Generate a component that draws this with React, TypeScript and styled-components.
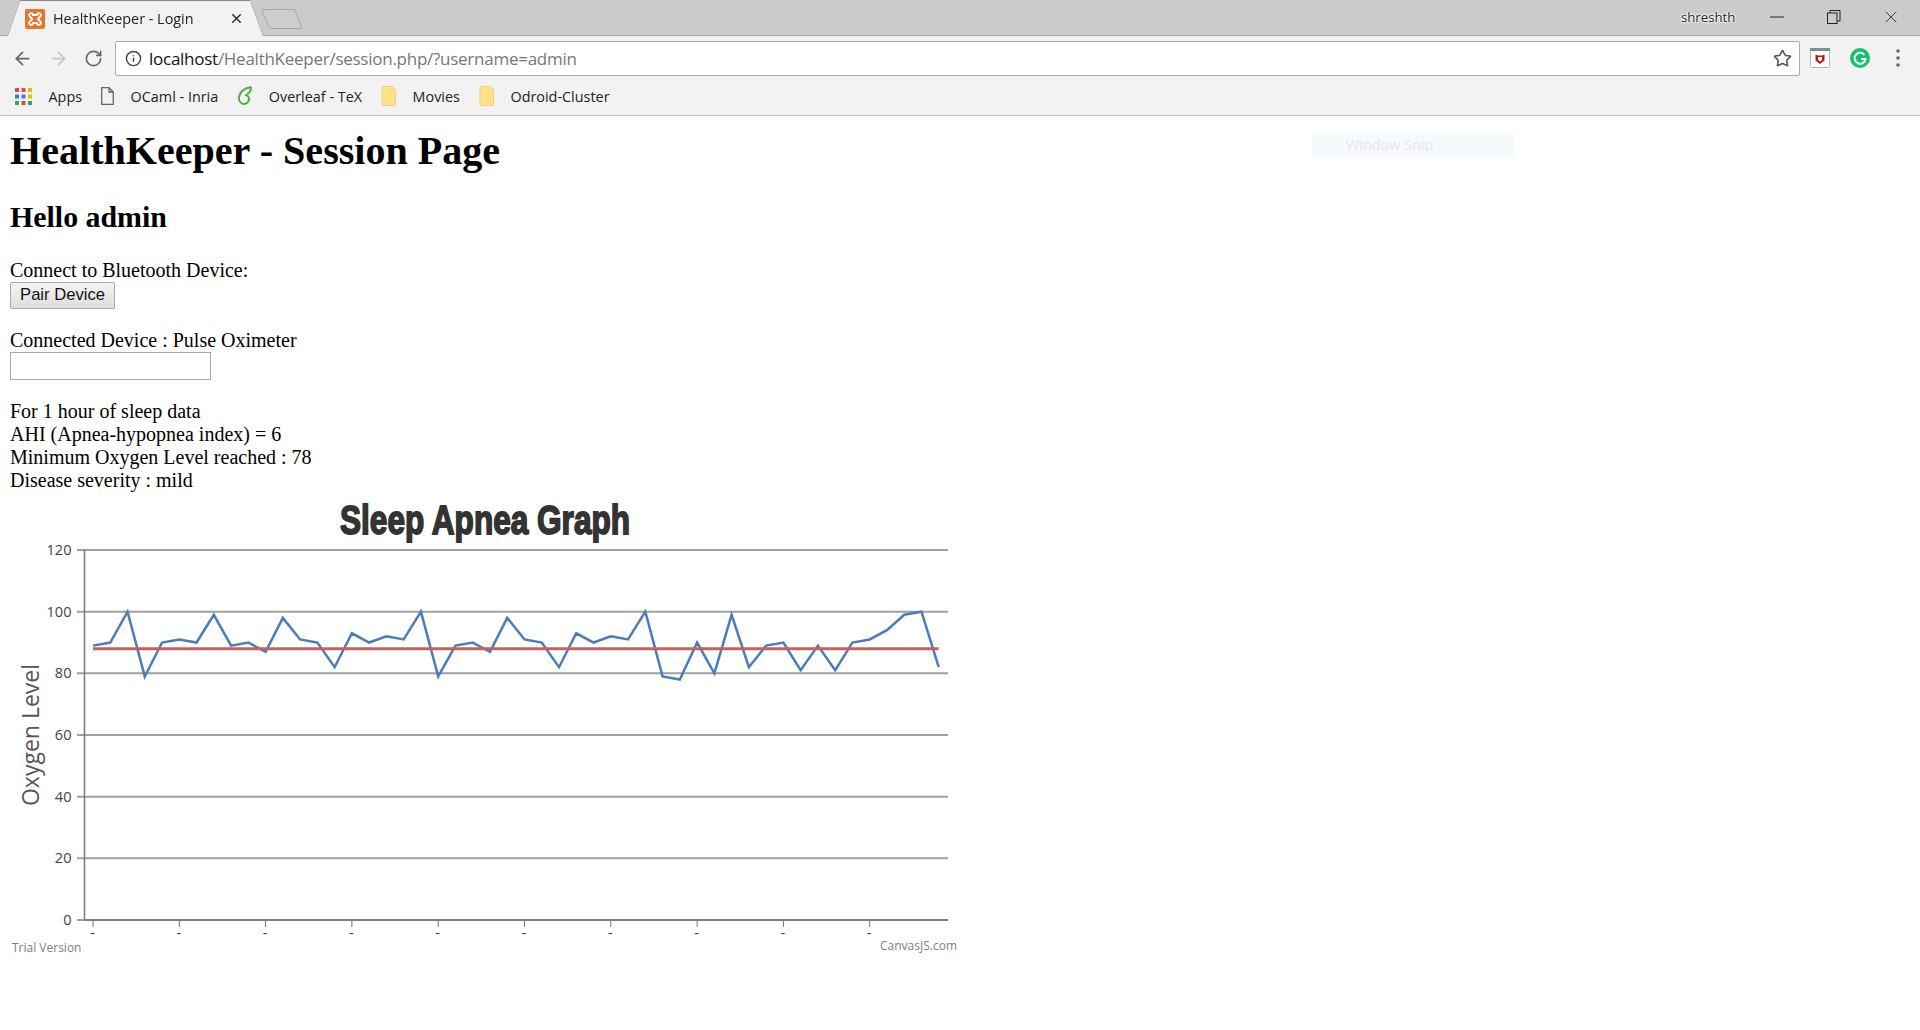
import { ArrowLeft, ArrowRight, Info, RotateCw, Star, X } from 'lucide-react';
import styled, { createGlobalStyle } from 'styled-components';

const GlobalStyle = createGlobalStyle`
    html, body {
        margin: 0;
        padding: 0;
        background: #fff;
        height: 100%;
        overflow: hidden;
    }
`;

const uiFont = `"Open Sans", "Noto Sans", sans-serif`;

const Window = styled.div`
    position: relative;
    width: 1920px;
    height: 1030px;
    background: #fff;
`;

/* browser chrome */

const TabStrip = styled.div`
    display: flex;
    align-items: flex-end;
    height: 35px;
    padding-left: 8px;
    background: #cbcbcb;
    border-bottom: 1px solid #a5a5a5;
`;

const TabOutline = styled.div`
    filter: drop-shadow(0 -0.5px 0.5px #8a8a8a);
    margin-bottom: -1px;
`;

const TabShape = styled.div`
    display: flex;
    align-items: center;
    width: 255px;
    height: 35px;
    padding: 0 19px 0 17px;
    box-sizing: border-box;
    background: #f2f2f2;
    clip-path: polygon(0 100%, 12px 0, 242px 0, 255px 100%);
`;

const TabTitle = styled.span`
    flex: 1;
    margin-left: 8px;
    font: 14.4px ${uiFont};
    color: #222;
`;

const NewTab = styled.div`
    width: 34px;
    height: 20px;
    margin: 0 0 6px 2px;
    background: #cdcdcd;
    border: 1.5px solid #a8a8a8;
    border-radius: 2px;
    box-sizing: border-box;
    transform: skewX(22deg);
`;

const WindowControls = styled.div`
    display: flex;
    align-items: center;
    align-self: stretch;
    margin-left: auto;
    padding: 0 1px 2px 0;
`;

const UserName = styled.span`
    width: 67px;
    font: 13.2px ${uiFont};
    color: #222;
    text-shadow: 0 0 1px #fff, 0 0 2px #fff, 0 0 2px #fff, 0 0 3px #fff;
`;

const ControlButton = styled.div`
    display: flex;
    align-items: center;
    justify-content: center;
    width: 57px;
    height: 33px;
    color: #222;
`;

const Toolbar = styled.div`
    display: flex;
    align-items: center;
    height: 44px;
    background: #f2f2f2;
`;

const NavButton = styled.div<{ $off?: boolean }>`
    display: flex;
    align-items: center;
    justify-content: center;
    width: 35.5px;
    height: 34px;
    color: ${(p) => (p.$off ? '#c8c8c8' : '#666')};
`;

const NavGroup = styled.div`
    display: flex;
    padding-left: 5px;
    margin-right: 3.5px;
`;

const AddressBar = styled.div`
    display: flex;
    align-items: center;
    width: 1685px;
    height: 35px;
    padding: 0 7px 0 9px;
    box-sizing: border-box;
    background: #fff;
    border: 1px solid #ababab;
    border-radius: 2px;
`;

const Url = styled.span`
    flex: 1;
    margin-left: 7px;
    font: 17px ${uiFont};
    color: #777;
    letter-spacing: -0.26px;
`;

const Host = styled.span`
    color: #111;
`;

const Extensions = styled.div`
    display: flex;
    align-items: center;
    padding-left: 10px;
`;

const ExtensionSlot = styled.div<{ $w: number }>`
    display: flex;
    justify-content: center;
    width: ${(p) => p.$w}px;
`;

const Bookmarks = styled.div`
    display: flex;
    align-items: center;
    gap: 19px;
    height: 36px;
    box-sizing: border-box;
    padding: 0 0 3px 15px;
    background: #f2f2f2;
    border-bottom: 1px solid #bcbcbc;
`;

const Bookmark = styled.div`
    display: flex;
    align-items: center;
    gap: 16.5px;
    font: 14.4px ${uiFont};
    color: #222;
`;

/* page content */

const Page = styled.main`
    padding: 12px 10px 0;
    font-family: "Liberation Serif", "Times New Roman", serif;
    color: #000;
`;

const Title = styled.h1`
    margin: 0;
    font-size: 40.1px;
    line-height: 45px;
    font-weight: bold;
`;

const Greeting = styled.h2`
    margin: 27px 0 0;
    font-size: 29.9px;
    line-height: 34px;
    font-weight: bold;
`;

const Block = styled.div<{ $gap: number }>`
    margin-top: ${(p) => p.$gap}px;
    font-size: 20px;
    line-height: 23px;
`;

const PairButton = styled.button`
    display: block;
    width: 105px;
    height: 27px;
    padding: 0 0 2px;
    font: 16.6px "Liberation Sans", Arial, sans-serif;
    color: #111;
    background: linear-gradient(#f4f4f4, #dedede);
    border: 1px solid #a9a9a9;
    border-radius: 2px;
`;

const DeviceInput = styled.input`
    display: block;
    width: 201px;
    height: 28px;
    padding: 0;
    box-sizing: border-box;
    background: #fff;
    border: 1px solid #a9a9a9;
`;

const ChartCanvas = styled.svg`
    display: block;
    width: 960px;
    height: 470px;
`;

const SnipLabel = styled.div`
    position: absolute;
    left: 1312px;
    top: 133px;
    width: 202px;
    height: 24px;
    padding-left: 34px;
    box-sizing: border-box;
    background: #f5faff;
    font: 14.4px/24px ${uiFont};
    color: #e8e8e8;
`;

const AxisValue = styled.text`
    font: 14.6px ${uiFont};
    fill: #444;
`;

const AxisTitle = styled.text`
    font: 23px ${uiFont};
    fill: #555;
`;

const ChartTitle = styled.text`
    font: bold 41px "Liberation Sans Narrow", "Liberation Sans", sans-serif;
    fill: #333;
    stroke: #333;
    stroke-width: 1.8px;
`;

const Credit = styled.text`
    font: 12px ${uiFont};
    fill: #808080;
`;

/* drawn icons */

const XamppIcon = () => (
    <svg width="20" height="20" viewBox="0 0 20 20">
        <rect width="20" height="20" rx="2" fill="#e8762a" />
        <path
            d="M5 4.5c1.6-1 3 .2 3.2 1.5h3.6c.2-1.3 1.6-2.5 3.2-1.5 1.4.9 1 3-.4 3.5l-1.8 2 1.8 2c1.4.5 1.8 2.6.4 3.5-1.6 1-3-.2-3.2-1.5H8.2c-.2 1.3-1.6 2.5-3.2 1.5-1.4-.9-1-3 .4-3.5l1.8-2-1.8-2C4 7.5 3.6 5.4 5 4.5z"
            fill="none"
            stroke="#fff"
            strokeWidth="1.9"
        />
    </svg>
);

const RestoreIcon = () => (
    <svg width="14" height="14" viewBox="0 0 14 14" fill="none" stroke="#222" strokeWidth="1">
        <rect x="0.5" y="3" width="9.5" height="10.5" />
        <path d="M3 3V0.5H13V11H10" />
    </svg>
);

const AppsIcon = () => {
    const colors = ['#e8453c', '#e8453c', '#f4b400', '#3b78e7', '#3b78e7', '#f4b400', '#34a853', '#e8453c', '#34a853'];
    return (
        <svg width="17" height="17" viewBox="0 0 17 17">
            {colors.map((c, i) => (
                <rect key={i} x={(i % 3) * 6.5} y={Math.floor(i / 3) * 6.5} width="4" height="4" fill={c} />
            ))}
        </svg>
    );
};

const DocIcon = () => (
    <svg width="13" height="18" viewBox="0 0 13 18" fill="none" stroke="#666" strokeWidth="1.3">
        <path d="M0.7 0.7H8L12.3 5V17.3H0.7z" />
        <path d="M8 0.7V5H12.3" />
    </svg>
);

const LeafIcon = () => (
    <svg width="15" height="20" viewBox="0 0 15 20" fill="none" stroke="#4caf3f" strokeWidth="2">
        <path d="M14 1C9 2 3 5 2 11c-.6 4 2 7 5 7s5-2.5 5-5c0-2-1.5-4-4-4" />
        <path d="M14 1c0 3-1 6-4 7" />
    </svg>
);

const FolderIcon = () => (
    <svg width="15" height="20" viewBox="0 0 15 20">
        <path d="M1 0.5H11L14.5 4V19.5H1z" fill="#fde28a" stroke="#f0d27a" />
    </svg>
);

const McAfeeIcon = () => (
    <svg width="20" height="20" viewBox="0 0 20 20">
        <rect x="0.5" y="0.5" width="19" height="19" rx="1" fill="#fff" stroke="#b8b8b8" />
        <rect width="20" height="3" fill="#78909c" />
        <path d="M5.5 6.5L8 7.5h4l2.5-1v6L10 16l-4.5-3.5z" fill="#c01818" />
        <path d="M8 9v3l2 1.5 2-1.5V9z" fill="#fff" />
    </svg>
);

const GrammarlyIcon = () => (
    <svg width="20" height="20" viewBox="0 0 20 20">
        <circle cx="10" cy="10" r="10" fill="#15c26b" />
        <path d="M14.5 7A5.5 5.5 0 1 0 15.5 11H11" fill="none" stroke="#fff" strokeWidth="2" />
    </svg>
);

const DotsIcon = () => (
    <svg width="4" height="18" viewBox="0 0 4 18" fill="#666">
        <circle cx="2" cy="2" r="1.8" />
        <circle cx="2" cy="9" r="1.8" />
        <circle cx="2" cy="16" r="1.8" />
    </svg>
);

/* chart */

const oxygen = [
    89, 90, 100, 79, 90, 91, 90, 99, 89, 90, 87, 98, 91, 90, 82, 93, 90, 92, 91, 100, 79, 89, 90, 87, 98, 91, 90, 82,
    93, 90, 92, 91, 100, 79, 78, 90, 80, 99, 82, 89, 90, 81, 89, 81, 90, 91, 94, 99, 100, 82,
];

const xOf = (i: number) => 93 + i * 17.26;
const yOf = (v: number) => 920 - v * 3.083;

const SleepChart = () => (
    <ChartCanvas viewBox="10 492 960 470">
        <ChartTitle x="340" y="534" textLength="290" lengthAdjust="spacingAndGlyphs">
            Sleep Apnea Graph
        </ChartTitle>
        {[0, 20, 40, 60, 80, 100, 120].map((v) => (
            <g key={v}>
                <line x1="77" x2="948" y1={yOf(v)} y2={yOf(v)} stroke="#a0a0a0" strokeWidth="2" />
                <AxisValue x="71.5" y={yOf(v) + 5} textAnchor="end">
                    {v}
                </AxisValue>
            </g>
        ))}
        <line x1="84.5" x2="84.5" y1="549" y2="921" stroke="#777" strokeWidth="1.5" />
        <line x1="84" x2="948" y1="920" y2="920" stroke="#808080" strokeWidth="2" />
        {[0, 5, 10, 15, 20, 25, 30, 35, 40, 45].map((i) => (
            <g key={i}>
                <line x1={xOf(i)} x2={xOf(i)} y1="920" y2="927" stroke="#777" strokeWidth="1" />
                <AxisValue x={xOf(i) - 0.5} y="938" textAnchor="middle">
                    -
                </AxisValue>
            </g>
        ))}
        <polyline
            points={oxygen.map((v, i) => `${xOf(i)},${yOf(v)}`).join(' ')}
            fill="none"
            stroke="#4a7ebb"
            strokeWidth="2.5"
        />
        <line x1="93" x2="938.5" y1={yOf(88)} y2={yOf(88)} stroke="#c9605e" strokeWidth="3" />
        <AxisTitle transform="translate(39 735) rotate(-90)" textAnchor="middle">
            Oxygen Level
        </AxisTitle>
        <Credit x="12" y="952">
            Trial Version
        </Credit>
        <Credit x="957" y="950" textAnchor="end">
            CanvasJS.com
        </Credit>
    </ChartCanvas>
);

const App = () => {
    return (
        <Window>
            <GlobalStyle />
            <TabStrip>
                <TabOutline>
                    <TabShape>
                        <XamppIcon />
                        <TabTitle>HealthKeeper - Login</TabTitle>
                        <X size={15} strokeWidth={2.5} color="#333" />
                    </TabShape>
                </TabOutline>
                <NewTab />
                <WindowControls>
                    <UserName>shreshth</UserName>
                    <ControlButton>
                        <svg width="14" height="2" viewBox="0 0 14 2">
                            <line x1="0" x2="14" y1="1" y2="1" stroke="#222" />
                        </svg>
                    </ControlButton>
                    <ControlButton>
                        <RestoreIcon />
                    </ControlButton>
                    <ControlButton>
                        <X size={20} strokeWidth={1} />
                    </ControlButton>
                </WindowControls>
            </TabStrip>
            <Toolbar>
                <NavGroup>
                    <NavButton>
                        <ArrowLeft size={21} strokeWidth={2} />
                    </NavButton>
                    <NavButton $off>
                        <ArrowRight size={21} strokeWidth={2} />
                    </NavButton>
                    <NavButton>
                        <RotateCw size={19} strokeWidth={2} />
                    </NavButton>
                </NavGroup>
                <AddressBar>
                    <Info size={17} strokeWidth={2} color="#444" />
                    <Url>
                        <Host>localhost</Host>/HealthKeeper/session.php/?username=admin
                    </Url>
                    <Star size={19} strokeWidth={2} color="#555" />
                </AddressBar>
                <Extensions>
                    <McAfeeIcon />
                    <ExtensionSlot $w={60}>
                        <GrammarlyIcon />
                    </ExtensionSlot>
                    <ExtensionSlot $w={16}>
                        <DotsIcon />
                    </ExtensionSlot>
                </Extensions>
            </Toolbar>
            <Bookmarks>
                <Bookmark>
                    <AppsIcon />
                    Apps
                </Bookmark>
                <Bookmark>
                    <DocIcon />
                    OCaml - Inria
                </Bookmark>
                <Bookmark>
                    <LeafIcon />
                    Overleaf - TeX
                </Bookmark>
                <Bookmark>
                    <FolderIcon />
                    Movies
                </Bookmark>
                <Bookmark>
                    <FolderIcon />
                    Odroid-Cluster
                </Bookmark>
            </Bookmarks>
            <Page>
                <Title>HealthKeeper - Session Page</Title>
                <Greeting>Hello admin</Greeting>
                <Block $gap={25}>
                    Connect to Bluetooth Device:
                    <PairButton>Pair Device</PairButton>
                </Block>
                <Block $gap={20}>
                    Connected Device : Pulse Oximeter
                    <DeviceInput type="text" />
                </Block>
                <Block $gap={20}>
                    For 1 hour of sleep data
                    <br />
                    AHI (Apnea-hypopnea index) = 6
                    <br />
                    Minimum Oxygen Level reached : 78
                    <br />
                    Disease severity : mild
                </Block>
                <SleepChart />
            </Page>
            <SnipLabel>Window Snip</SnipLabel>
        </Window>
    );
};

export default App;
